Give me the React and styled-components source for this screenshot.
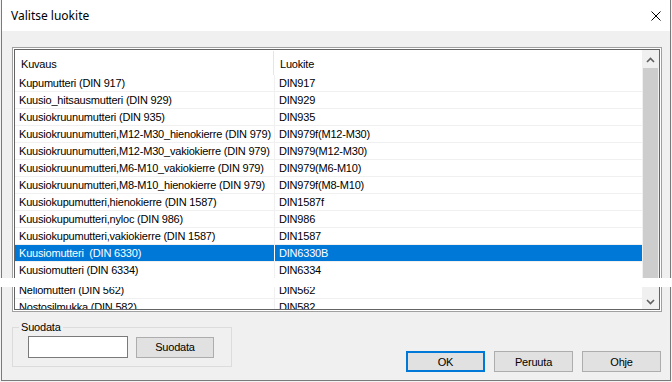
import React from "react";
import styled, { createGlobalStyle } from "styled-components";

const GlobalStyle = createGlobalStyle`
  html, body { margin: 0; padding: 0; background: #f3f3f3; }
  * { box-sizing: border-box; }
`;

const UI_FONT = `"Liberation Sans", Arial, sans-serif`;

const Root = styled.div`
  position: relative;
  width: 672px;
  height: 382px;
  overflow: hidden;
  font-family: ${UI_FONT};
  font-size: 11px;
  letter-spacing: -0.2px;
  color: #000;
`;

const Window = styled.div`
  margin-left: 1px;
  width: 670px;
  height: 381px;
  border: 1px solid #7a7a7a;
  border-top: none;
  background: #f0f0f0;
  display: flex;
  flex-direction: column;
`;

const TitleBar = styled.div`
  height: 31px;
  flex: none;
  background: #fff;
  display: flex;
  align-items: center;
  justify-content: space-between;
  padding: 0 9px 0 9px;
`;

const Title = styled.span`
  font-family: "Noto Sans", "Open Sans", sans-serif;
  font-size: 12px;
  letter-spacing: 0;
  color: #000;
`;

const CloseIcon = styled.svg`
  width: 10px;
  height: 10px;
  display: block;
`;

const Body = styled.div`
  flex: 1;
  display: flex;
  flex-direction: column;
  padding: 16px 8px 0 10px;
`;

const ListFrame = styled.div`
  height: 265px;
  flex: none;
  border: 1px solid #a0a0a0;
  padding: 1px;
  background: #fff;
`;

const ListInner = styled.div`
  height: 100%;
  border: 1px solid #646464;
  display: flex;
  overflow: hidden;
`;

const ListContent = styled.div`
  flex: 1;
  min-width: 0;
  display: flex;
  flex-direction: column;
  background: #fff;
`;

const Header = styled.div`
  height: 25px;
  flex: none;
  display: grid;
  grid-template-columns: 259px 1fr;
`;

const HeaderCell = styled.div`
  display: flex;
  align-items: center;
  padding-left: 6px;
  padding-top: 1px;
  box-shadow: ${(p) => (p.$divider ? "inset -1px 0 0 #e5e5e5" : "none")};
  margin-top: 1px;
`;

const Row = styled.div`
  display: grid;
  grid-template-columns: 260px 1fr;
  height: 17px;
  flex: none;
  border-bottom: 1px solid #f0f0f0;
  margin-top: ${(p) => (p.$shift ? `${p.$shift}px` : "0")};
  background: ${(p) => (p.$selected ? "#0078d7" : "#fff")};
  color: ${(p) => (p.$selected ? "#fff" : "#000")};
`;

const Cell = styled.div`
  padding-left: 4px;
  line-height: 16px;
  white-space: pre;
  overflow: hidden;
  border-right: ${(p) =>
    p.$divider ? `1px solid ${p.$selected ? "#ffffff" : "#f0f0f0"}` : "none"};
`;

const ScrollBar = styled.div`
  width: 17px;
  flex: none;
  background: #f0f0f0;
  display: flex;
  flex-direction: column;
`;

const ArrowButton = styled.div`
  height: 17px;
  flex: none;
  display: flex;
  justify-content: center;
  align-items: center;
  padding-top: ${(p) => (p.$down ? "3px" : "3px")};
`;

const Track = styled.div`
  flex: 1;
  display: flex;
  flex-direction: column;
`;

const Thumb = styled.div`
  height: 215px;
  margin: 1px 1px 0 1px;
  background: #cdcdcd;
`;

const Footer = styled.div`
  display: flex;
  justify-content: space-between;
  align-items: flex-start;
`;

const GroupBox = styled.div`
  position: relative;
  width: 220px;
  height: 40px;
  margin-top: 15px;
  border: 1px solid #dcdcdc;
  display: flex;
  align-items: center;
  gap: 8px;
  padding-left: 15px;
`;

const Legend = styled.span`
  position: absolute;
  top: -8px;
  left: 6px;
  padding: 0 2px;
  line-height: 14px;
  background: #f0f0f0;
`;

const TextInput = styled.input`
  width: 100px;
  height: 22px;
  border: 1px solid #7a7a7a;
  background: #fff;
  padding: 0 3px;
  font-family: ${UI_FONT};
  font-size: 11px;
  outline: none;
  margin: 0;
`;

const Button = styled.button`
  width: ${(p) => (p.$narrow ? "78px" : "79px")};
  height: 21px;
  margin: 0;
  padding: 0;
  background: #e1e1e1;
  border: ${(p) => (p.$primary ? "2px solid #0078d7" : "1px solid #adadad")};
  font-family: ${UI_FONT};
  font-size: 11px;
  letter-spacing: -0.2px;
  color: #000;
  display: flex;
  align-items: center;
  justify-content: center;
`;

const ButtonRow = styled.div`
  display: flex;
  gap: 9px;
  margin-top: 39px;
  margin-right: 1px;
`;

const GlitchBand = styled.div`
  position: absolute;
  left: 0;
  right: 0;
  top: 278px;
  height: 9px;
  background: #fff;
`;

const rows = [
  ["Kupumutteri (DIN 917)", "DIN917"],
  ["Kuusio_hitsausmutteri (DIN 929)", "DIN929"],
  ["Kuusiokruunumutteri (DIN 935)", "DIN935"],
  ["Kuusiokruunumutteri,M12-M30_hienokierre (DIN 979)", "DIN979f(M12-M30)"],
  ["Kuusiokruunumutteri,M12-M30_vakiokierre (DIN 979)", "DIN979(M12-M30)"],
  ["Kuusiokruunumutteri,M6-M10_vakiokierre (DIN 979)", "DIN979(M6-M10)"],
  ["Kuusiokruunumutteri,M8-M10_hienokierre (DIN 979)", "DIN979f(M8-M10)"],
  ["Kuusiokupumutteri,hienokierre (DIN 1587)", "DIN1587f"],
  ["Kuusiokupumutteri,nyloc (DIN 986)", "DIN986"],
  ["Kuusiokupumutteri,vakiokierre (DIN 1587)", "DIN1587"],
  ["Kuusiomutteri  (DIN 6330)", "DIN6330B", true],
  ["Kuusiomutteri (DIN 6334)", "DIN6334"],
  ["Neliomutteri (DIN 562)", "DIN562", false, 3],
  ["Nostosilmukka (DIN 582)", "DIN582"],
];

const Chevron = ({ down }) => (
  <svg width="9" height="6" viewBox="0 0 9 6">
    <path
      d={down ? "M1 1 L4.5 4.5 L8 1" : "M1 5 L4.5 1.5 L8 5"}
      fill="none"
      stroke="#606060"
      strokeWidth="1.6"
    />
  </svg>
);

export default function App() {
  return (
    <Root>
      <GlobalStyle />
      <Window>
        <TitleBar>
          <Title>Valitse luokite</Title>
          <CloseIcon viewBox="0 0 10 10">
            <path d="M0.5 0.5 L9.5 9.5 M9.5 0.5 L0.5 9.5" stroke="#000" strokeWidth="1" />
          </CloseIcon>
        </TitleBar>
        <Body>
          <ListFrame>
            <ListInner>
              <ListContent>
                <Header>
                  <HeaderCell $divider>Kuvaus</HeaderCell>
                  <HeaderCell>Luokite</HeaderCell>
                </Header>
                {rows.map(([desc, code, selected, shift]) => (
                  <Row key={desc} $selected={selected} $shift={shift}>
                    <Cell $divider $selected={selected}>{desc}</Cell>
                    <Cell>{code}</Cell>
                  </Row>
                ))}
              </ListContent>
              <ScrollBar>
                <ArrowButton>
                  <Chevron />
                </ArrowButton>
                <Track>
                  <Thumb />
                </Track>
                <ArrowButton $down>
                  <Chevron down />
                </ArrowButton>
              </ScrollBar>
            </ListInner>
          </ListFrame>
          <Footer>
            <GroupBox>
              <Legend>Suodata</Legend>
              <TextInput type="text" />
              <Button $narrow>Suodata</Button>
            </GroupBox>
            <ButtonRow>
              <Button $primary>OK</Button>
              <Button>Peruuta</Button>
              <Button>Ohje</Button>
            </ButtonRow>
          </Footer>
        </Body>
      </Window>
      <GlitchBand />
    </Root>
  );
}
